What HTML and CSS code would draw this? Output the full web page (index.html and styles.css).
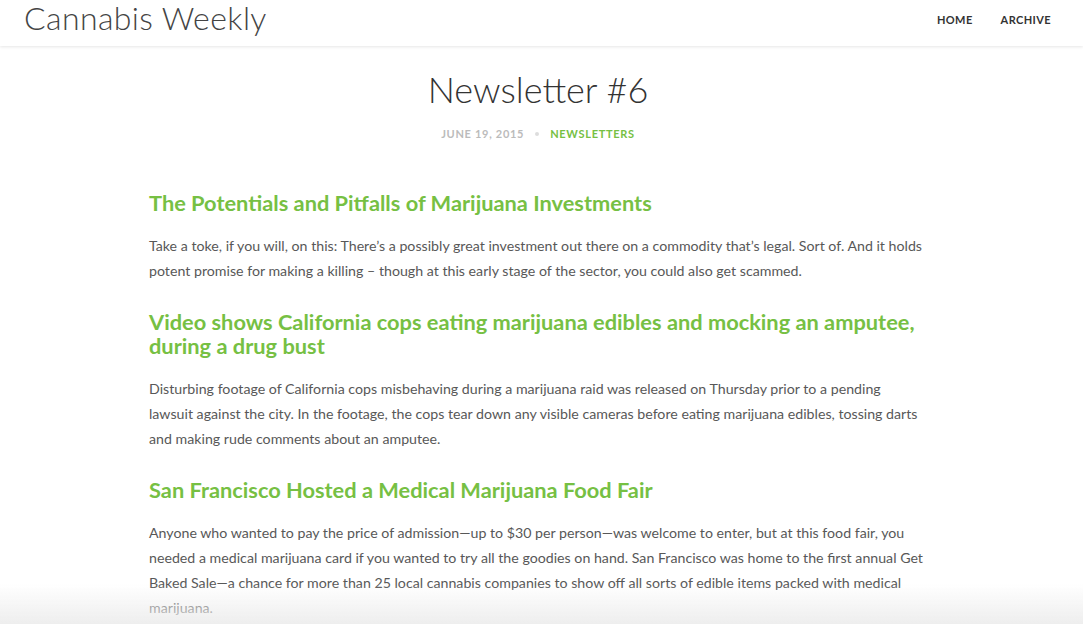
FILE: index.html
```html
<!DOCTYPE html>
<html lang="en">
<head>
<meta charset="utf-8">
<title>Newsletter #6 – Cannabis Weekly</title>
<link rel="stylesheet" href="styles.css">
</head>
<body>
<header class="site-header">
  <a class="brand" href="#">Cannabis Weekly</a>
  <nav class="nav">
    <a href="#">HOME</a>
    <a href="#">ARCHIVE</a>
  </nav>
</header>
<main class="post">
  <div class="post-head">
    <h1 class="post-title">Newsletter #6</h1>
    <div class="post-meta">
      <span class="date">JUNE 19, 2015</span>
      <span class="sep"></span>
      <a class="cat" href="#">NEWSLETTERS</a>
    </div>
  </div>
  <article class="content">
    <h2>The Potentials and Pitfalls of Marijuana Investments</h2>
    <p>Take a toke, if you will, on this: There’s a possibly great investment out there on a commodity that’s legal. Sort of. And it holds potent promise for making a killing – though at this early stage of the sector, you could also get scammed.</p>
    <h2>Video shows California cops eating marijuana edibles and mocking an amputee, during a drug bust</h2>
    <p>Disturbing footage of California cops misbehaving during a marijuana raid was released on Thursday prior to a pending lawsuit against the city. In the footage, the cops tear down any visible cameras before eating marijuana edibles, tossing darts and making rude comments about an amputee.</p>
    <h2>San Francisco Hosted a Medical Marijuana Food Fair</h2>
    <p>Anyone who wanted to pay the price of admission—up to $30 per person—was welcome to enter, but at this food fair, you needed a medical marijuana card if you wanted to try all the goodies on hand. San Francisco was home to the first annual Get Baked Sale—a chance for more than 25 local cannabis companies to show off all sorts of edible items packed with medical marijuana.</p>
  </article>
</main>
<div class="bottom-fade"></div>
</body>
</html>
```
FILE: styles.css
```css
* { box-sizing: border-box; }
html, body { margin: 0; padding: 0; background: #fff; }
body { font-family: Lato, "Open Sans", sans-serif; color: #555; }
a { text-decoration: none; }

.site-header {
  height: 46px;
  display: flex;
  align-items: flex-start;
  justify-content: space-between;
  padding: 0 32px 0 24px;
  background: #fff;
  box-shadow: 0 1px 3px rgba(0,0,0,0.10);
  position: relative;
  z-index: 2;
}
.brand {
  font-family: Lato, sans-serif;
  font-weight: 300;
  font-size: 32px;
  line-height: 32px;
  padding-top: 2px;
  color: #444;
  letter-spacing: 0.4px;
}
.nav { display: flex; gap: 28px; padding-top: 13px; }
.nav a {
  font-size: 11px;
  line-height: 14px;
  font-weight: 700;
  color: #333;
  letter-spacing: 0.4px;
}

.post { max-width: 785px; margin: 0 auto; }
.post-head { padding-right: 7px; }
.post-title {
  margin: 21px 0 0;
  text-align: center;
  font-weight: 300;
  font-size: 36px;
  line-height: 44px;
  color: #333;
}
.post-meta {
  margin-top: 16px;
  display: flex;
  justify-content: center;
  align-items: center;
  gap: 11px;
  font-size: 11px;
  font-weight: 700;
  letter-spacing: 0.7px;
  line-height: 14px;
}
.date { color: #bbb; }
.sep { width: 4px; height: 4px; background: #ddd; border-radius: 50%; }
.cat { color: #76c043; }

.content { margin-top: 50px; padding-right: 8px; }
.content h2 {
  margin: 0;
  font-size: 21.8px;
  font-weight: 700;
  line-height: 24px;
  color: #76c043;
}
.content p {
  margin: 18px 0 27px;
  font-size: 14.2px;
  line-height: 25px;
  color: #585858;
}

.bottom-fade {
  position: fixed;
  left: 0; right: 0; bottom: 0;
  height: 40px;
  background: linear-gradient(to bottom, rgba(240,240,240,0), rgba(236,236,236,0.9));
  pointer-events: none;
}
```
